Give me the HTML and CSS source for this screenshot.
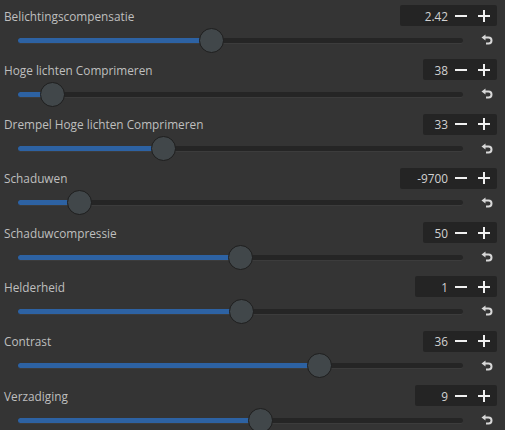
FILE: index.html
```html
<!DOCTYPE html>
<html>
    <head>
        <title>Belichting</title>
        <meta charset="UTF-8">
        <meta name="viewport" content="width=device-width, initial-scale=1.0">
        <link rel="stylesheet" href="styles.css">
    </head>
    <body>
        <div class="panel">
            <div class="row">
                <div class="head">
                    <label>Belichtingscompensatie</label>
                    <div class="spin w-l"><span class="val">2.42</span><span class="minus"></span><span class="plus"></span></div>
                </div>
                <div class="line">
                    <div class="track"><div class="fill" style="width: 43.4%"></div><div class="knob" style="left: 43.4%"></div></div>
                    <svg class="reset" width="12" height="12" viewBox="0 0 12 12"><path d="M4 3.5 H7.5 A3 3 0 0 1 7.5 9.5 H5" fill="none" stroke="#d8d8d8" stroke-width="2"/><path d="M0.5 3.5 L4.5 0.5 L4.5 6.5 Z" fill="#d8d8d8"/></svg>
                </div>
            </div>
            <div class="row">
                <div class="head">
                    <label>Hoge lichten Comprimeren</label>
                    <div class="spin w-s"><span class="val">38</span><span class="minus"></span><span class="plus"></span></div>
                </div>
                <div class="line">
                    <div class="track"><div class="fill" style="width: 7.6%"></div><div class="knob" style="left: 7.6%"></div></div>
                    <svg class="reset" width="12" height="12" viewBox="0 0 12 12"><path d="M4 3.5 H7.5 A3 3 0 0 1 7.5 9.5 H5" fill="none" stroke="#d8d8d8" stroke-width="2"/><path d="M0.5 3.5 L4.5 0.5 L4.5 6.5 Z" fill="#d8d8d8"/></svg>
                </div>
            </div>
            <div class="row">
                <div class="head">
                    <label>Drempel Hoge lichten Comprimeren</label>
                    <div class="spin w-s"><span class="val">33</span><span class="minus"></span><span class="plus"></span></div>
                </div>
                <div class="line">
                    <div class="track"><div class="fill" style="width: 32.6%"></div><div class="knob" style="left: 32.6%"></div></div>
                    <svg class="reset" width="12" height="12" viewBox="0 0 12 12"><path d="M4 3.5 H7.5 A3 3 0 0 1 7.5 9.5 H5" fill="none" stroke="#d8d8d8" stroke-width="2"/><path d="M0.5 3.5 L4.5 0.5 L4.5 6.5 Z" fill="#d8d8d8"/></svg>
                </div>
            </div>
            <div class="row">
                <div class="head">
                    <label>Schaduwen</label>
                    <div class="spin w-l"><span class="val">-9700</span><span class="minus"></span><span class="plus"></span></div>
                </div>
                <div class="line">
                    <div class="track"><div class="fill" style="width: 13.7%"></div><div class="knob" style="left: 13.7%"></div></div>
                    <svg class="reset" width="12" height="12" viewBox="0 0 12 12"><path d="M4 3.5 H7.5 A3 3 0 0 1 7.5 9.5 H5" fill="none" stroke="#d8d8d8" stroke-width="2"/><path d="M0.5 3.5 L4.5 0.5 L4.5 6.5 Z" fill="#d8d8d8"/></svg>
                </div>
            </div>
            <div class="row">
                <div class="head">
                    <label>Schaduwcompressie</label>
                    <div class="spin w-s"><span class="val">50</span><span class="minus"></span><span class="plus"></span></div>
                </div>
                <div class="line">
                    <div class="track"><div class="fill" style="width: 49.9%"></div><div class="knob" style="left: 49.9%"></div></div>
                    <svg class="reset" width="12" height="12" viewBox="0 0 12 12"><path d="M4 3.5 H7.5 A3 3 0 0 1 7.5 9.5 H5" fill="none" stroke="#d8d8d8" stroke-width="2"/><path d="M0.5 3.5 L4.5 0.5 L4.5 6.5 Z" fill="#d8d8d8"/></svg>
                </div>
            </div>
            <div class="row">
                <div class="head">
                    <label>Helderheid</label>
                    <div class="spin w-m"><span class="val">1</span><span class="minus"></span><span class="plus"></span></div>
                </div>
                <div class="line">
                    <div class="track"><div class="fill" style="width: 50.1%"></div><div class="knob" style="left: 50.1%"></div></div>
                    <svg class="reset" width="12" height="12" viewBox="0 0 12 12"><path d="M4 3.5 H7.5 A3 3 0 0 1 7.5 9.5 H5" fill="none" stroke="#d8d8d8" stroke-width="2"/><path d="M0.5 3.5 L4.5 0.5 L4.5 6.5 Z" fill="#d8d8d8"/></svg>
                </div>
            </div>
            <div class="row">
                <div class="head">
                    <label>Contrast</label>
                    <div class="spin w-s"><span class="val">36</span><span class="minus"></span><span class="plus"></span></div>
                </div>
                <div class="line">
                    <div class="track"><div class="fill" style="width: 67.6%"></div><div class="knob" style="left: 67.6%"></div></div>
                    <svg class="reset" width="12" height="12" viewBox="0 0 12 12"><path d="M4 3.5 H7.5 A3 3 0 0 1 7.5 9.5 H5" fill="none" stroke="#d8d8d8" stroke-width="2"/><path d="M0.5 3.5 L4.5 0.5 L4.5 6.5 Z" fill="#d8d8d8"/></svg>
                </div>
            </div>
            <div class="row">
                <div class="head">
                    <label>Verzadiging</label>
                    <div class="spin w-m"><span class="val">9</span><span class="minus"></span><span class="plus"></span></div>
                </div>
                <div class="line">
                    <div class="track"><div class="fill" style="width: 54.4%"></div><div class="knob" style="left: 54.4%"></div></div>
                    <svg class="reset" width="12" height="12" viewBox="0 0 12 12"><path d="M4 3.5 H7.5 A3 3 0 0 1 7.5 9.5 H5" fill="none" stroke="#d8d8d8" stroke-width="2"/><path d="M0.5 3.5 L4.5 0.5 L4.5 6.5 Z" fill="#d8d8d8"/></svg>
                </div>
            </div>
        </div>
    </body>
</html>
```

FILE: styles.css
```css
html,body{
    margin: 0;
    background-color: #343434;
}
body{
    font-family: "Open Sans", sans-serif;
    font-size: 11.8px;
    color: #bfbfbf;
}
.panel{
    padding: 0 8px 0 4px;
}
.row{
    height: 54.3px;
}
.head{
    display: flex;
    justify-content: space-between;
    align-items: center;
    height: 21px;
    padding-top: 5px;
}
.spin{
    display: flex;
    align-items: center;
    justify-content: flex-end;
    height: 21px;
    background-color: #242424;
    border-radius: 2px;
    padding-right: 7px;
    box-sizing: border-box;
}
.w-s{ width: 74px; }
.w-m{ width: 82px; }
.w-l{ width: 97px; }
.val{
    color: #d2d2d2;
    margin-right: 7px;
}
.minus,.plus{
    position: relative;
    width: 12px;
    height: 12px;
}
.minus{
    margin-right: 11px;
}
.minus::before,.plus::before,.plus::after{
    content: "";
    position: absolute;
    background-color: #f0f0f0;
}
.minus::before,.plus::before{
    left: 0;
    top: 5px;
    width: 12px;
    height: 2px;
}
.plus::after{
    left: 5px;
    top: 0;
    width: 2px;
    height: 12px;
}
.line{
    display: flex;
    align-items: center;
    height: 24px;
    margin-top: 2px;
}
.track{
    position: relative;
    flex: 1;
    height: 5px;
    margin-left: 14px;
    margin-right: 18px;
    background-color: #252525;
    border-radius: 3px;
    box-shadow: 0 1px 0 #3c3c3c;
}
.fill{
    height: 5px;
    border-radius: 3px;
    background-color: #2d62a3;
}
.knob{
    position: absolute;
    top: -10px;
    width: 23px;
    height: 23px;
    margin-left: -12px;
    border-radius: 50%;
    background-color: #41474a;
    border: 1px solid #1e1e1e;
}
.reset{
    margin-right: 4px;
}
```
